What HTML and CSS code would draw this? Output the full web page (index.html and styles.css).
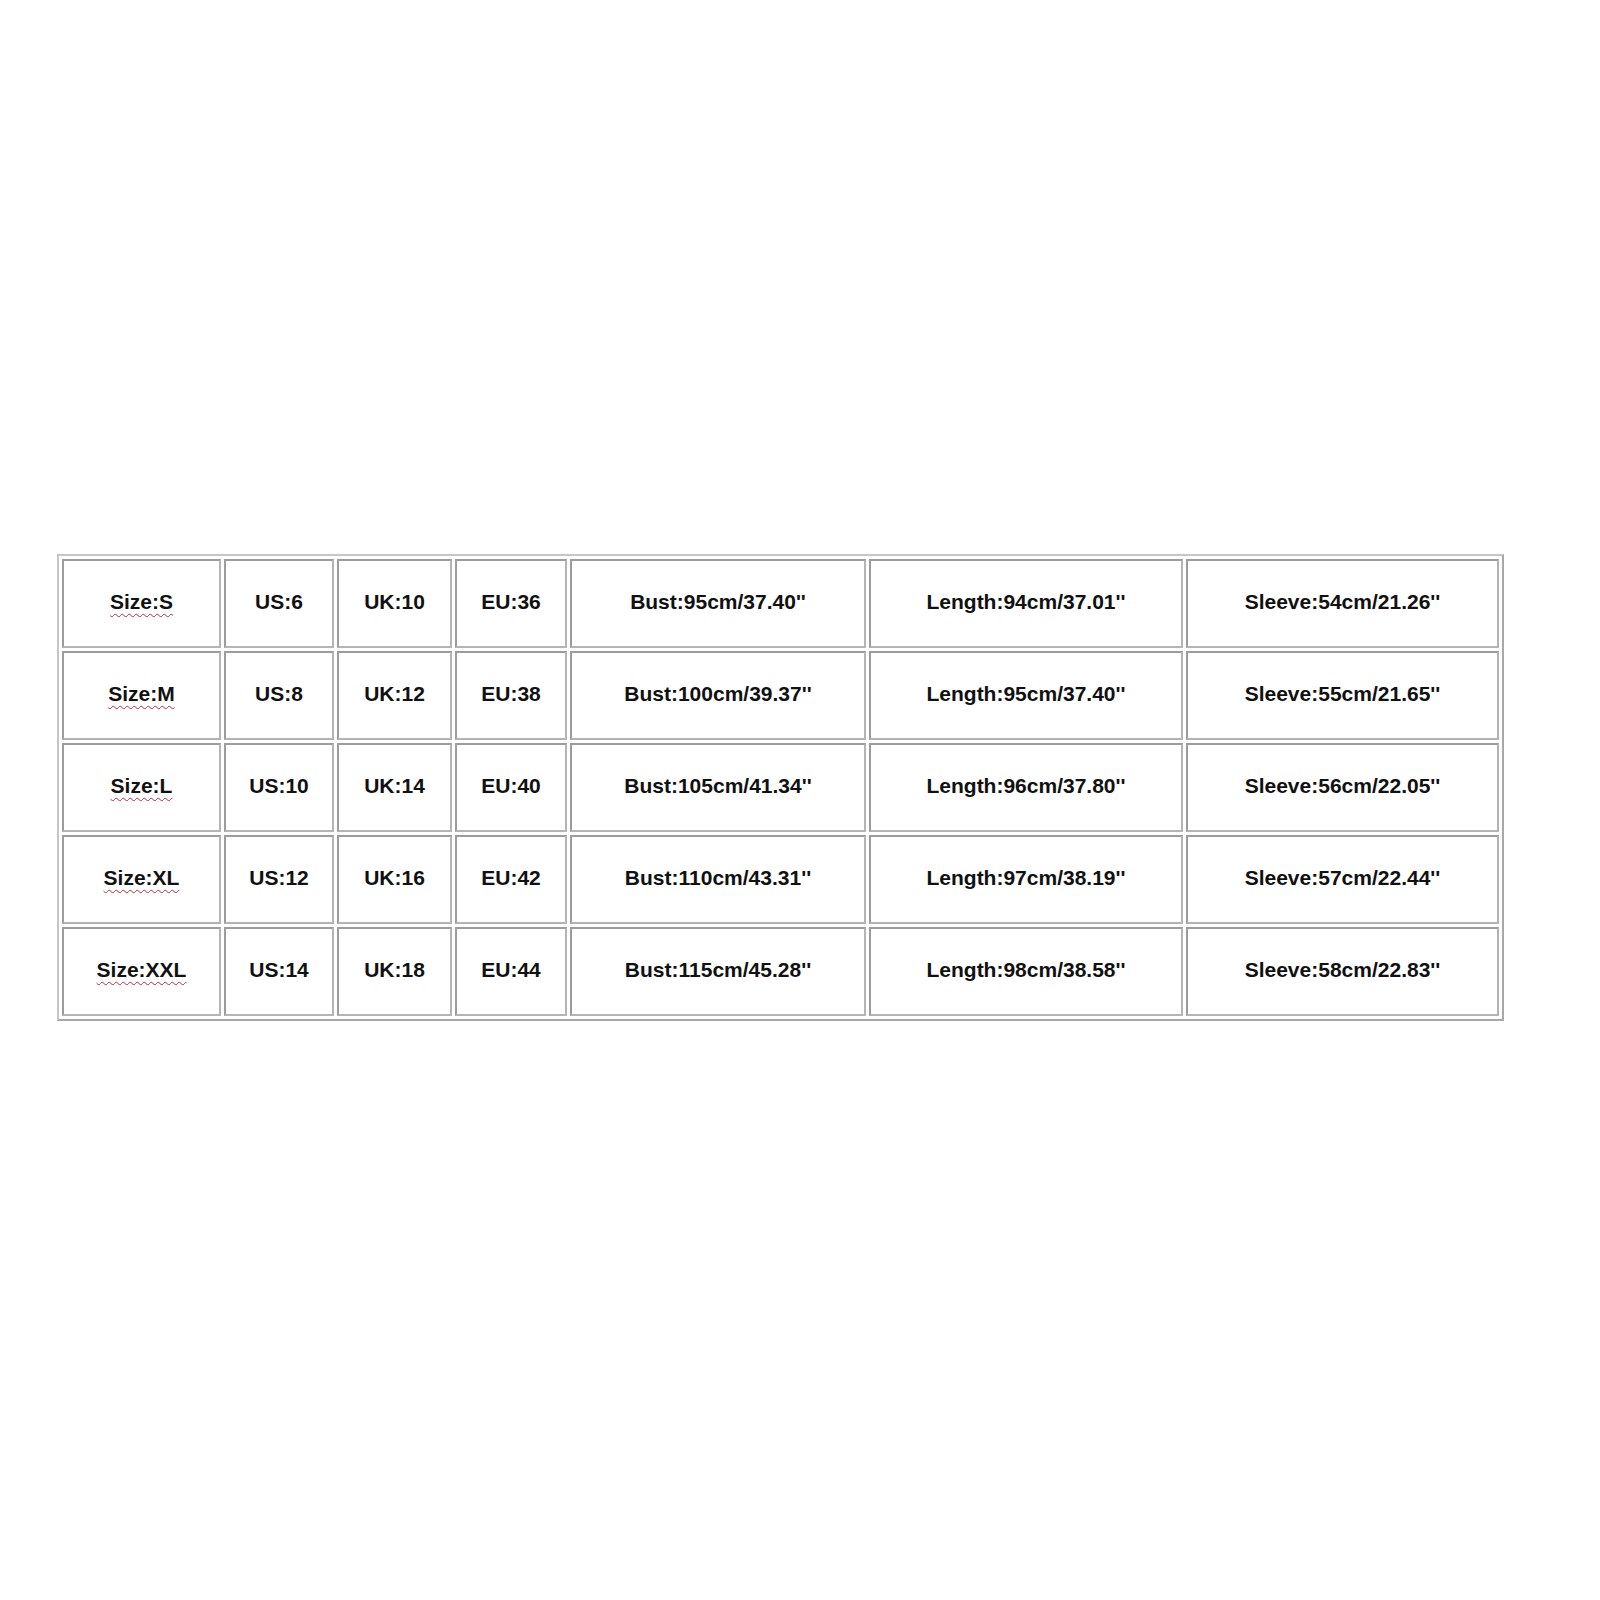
FILE: index.html
```html
<!DOCTYPE html>
<html>
<head>
<meta charset="utf-8">
<link rel="stylesheet" href="styles.css">
</head>
<body>
<table class="size-table">
  <colgroup>
    <col class="c-size"><col class="c-us"><col class="c-uk"><col class="c-eu"><col class="c-bust"><col class="c-len"><col class="c-sleeve">
  </colgroup>
  <tr>
    <td><span class="spell">Size:S</span></td><td>US:6</td><td>UK:10</td><td>EU:36</td><td>Bust:95cm/37.40''</td><td>Length:94cm/37.01''</td><td>Sleeve:54cm/21.26''</td>
  </tr>
  <tr>
    <td><span class="spell">Size:M</span></td><td>US:8</td><td>UK:12</td><td>EU:38</td><td>Bust:100cm/39.37''</td><td>Length:95cm/37.40''</td><td>Sleeve:55cm/21.65''</td>
  </tr>
  <tr>
    <td><span class="spell">Size:L</span></td><td>US:10</td><td>UK:14</td><td>EU:40</td><td>Bust:105cm/41.34''</td><td>Length:96cm/37.80''</td><td>Sleeve:56cm/22.05''</td>
  </tr>
  <tr>
    <td><span class="spell">Size:XL</span></td><td>US:12</td><td>UK:16</td><td>EU:42</td><td>Bust:110cm/43.31''</td><td>Length:97cm/38.19''</td><td>Sleeve:57cm/22.44''</td>
  </tr>
  <tr>
    <td><span class="spell">Size:XXL</span></td><td>US:14</td><td>UK:18</td><td>EU:44</td><td>Bust:115cm/45.28''</td><td>Length:98cm/38.58''</td><td>Sleeve:58cm/22.83''</td>
  </tr>
</table>
</body>
</html>
```
FILE: styles.css
```css
html, body {
  margin: 0;
  padding: 0;
  background: #ffffff;
}
body {
  font-family: "Liberation Sans", Arial, sans-serif;
}
.size-table {
  margin: 554px 0 0 57px;
  table-layout: fixed;
  width: 1447px;
  border-collapse: separate;
  border-spacing: 3px;
  border: 2px solid #c6c6c6;
  border-right-color: #a8a8a8;
  border-bottom-color: #a8a8a8;
}
.c-size { width: 159px; }
.c-us { width: 110px; }
.c-uk { width: 115px; }
.c-eu { width: 112px; }
.c-bust { width: 296px; }
.c-len { width: 314px; }
.c-sleeve { width: 313px; }
.size-table td {
  box-sizing: border-box;
  height: 89px;
  padding: 0 0 4px 0;
  border: 2px solid #9c9c9c;
  border-right-color: #b4b4b4;
  border-bottom-color: #b4b4b4;
  text-align: center;
  vertical-align: middle;
  font-size: 21px;
  font-weight: bold;
  color: #111111;
  white-space: nowrap;
}
.spell {
  text-decoration: underline wavy #b82a44;
  text-decoration-thickness: 1px;
  text-underline-offset: 4px;
}
```
